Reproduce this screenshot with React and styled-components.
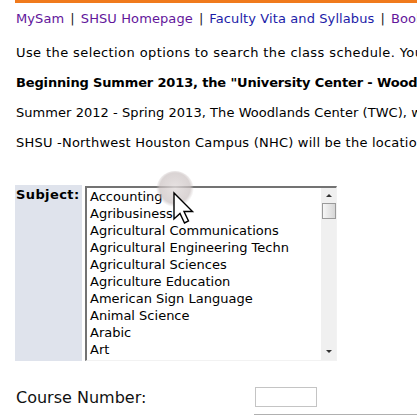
import styled, { createGlobalStyle } from 'styled-components';

const GlobalStyle = createGlobalStyle`
  html, body {
    margin: 0;
    padding: 0;
    background: #fff;
    overflow: hidden;
  }
  body {
    font-family: "DejaVu Sans", Verdana, sans-serif;
    color: #000;
  }
`;

const Page = styled.div`
  position: relative;
  width: 417px;
  height: 417px;
  overflow: hidden;
  padding-left: 15px;
  box-sizing: border-box;
`;

const OrangeBar = styled.div`
  height: 3px;
  background: #f07a1c;
  margin-right: -20px;
`;

const NavLine = styled.div`
  margin-top: 8px;
  padding-left: 1px;
  font-size: 13px;
  line-height: 15px;
  letter-spacing: 0.1px;
  white-space: nowrap;
  color: #333;
`;

const NavLink = styled.a`
  color: ${p => (p.$visited ? '#62169b' : '#1c1ca8')};
  text-decoration: none;
`;

const Sep = styled.span`
  margin: 0 6px;
  color: #222;
`;

const Para = styled.p`
  margin: ${p => p.$top || 15}px 0 0 1px;
  font-size: 13px;
  line-height: 15px;
  letter-spacing: ${p => p.$spacing || 0}px;
  white-space: nowrap;
  font-weight: ${p => (p.$bold ? 'bold' : 'normal')};
`;

const FormRow = styled.div`
  display: flex;
  align-items: stretch;
  margin-top: 35px;
  gap: 3px;
`;

const LabelCell = styled.div`
  width: 67px;
  background: #dfe3ec;
  font-weight: bold;
  font-size: 13px;
  letter-spacing: 0.4px;
  padding: 2px 0 0 1px;
  box-sizing: border-box;
`;

const ListBox = styled.div`
  display: flex;
  width: 252px;
  height: 175px;
  border-top: 2px solid #737373;
  border-left: 2px solid #737373;
  border-right: 1px solid #f2f2f2;
  border-bottom: 1px solid #f2f2f2;
  box-sizing: border-box;
  margin-top: 1px;
`;

const Options = styled.ul`
  flex: 1;
  list-style: none;
  margin: 0;
  padding: 0 0 0 3px;
  font-size: 13px;
  line-height: 17px;
  white-space: nowrap;
  overflow: hidden;
`;

const Scrollbar = styled.div`
  width: 15px;
  background: #f0f0f0;
  display: flex;
  flex-direction: column;
  align-items: center;
  padding-top: 6px;
`;

const Arrow = styled.div`
  width: 0;
  height: 0;
  border-left: 3px solid transparent;
  border-right: 3px solid transparent;
  ${p =>
    p.$down
      ? 'border-top: 3px solid #333; margin-top: auto; margin-bottom: 7px;'
      : 'border-bottom: 3px solid #333;'}
`;

const Thumb = styled.div`
  width: 14px;
  height: 16px;
  margin-top: 6px;
  border: 1px solid #9a9a9a;
  box-sizing: border-box;
  background: linear-gradient(to right, #f6f6f6, #d6d6d6);
`;

const CourseRow = styled.div`
  display: flex;
  align-items: center;
  margin-top: 26px;
`;

const CourseLabel = styled.div`
  width: 239px;
  padding-left: 1px;
  font-size: 16px;
  color: #111;
`;

const TextInput = styled.div`
  width: 62px;
  height: 20px;
  border: 1px solid #c4c4c4;
  box-sizing: border-box;
`;

const BottomLine = styled.div`
  margin: 7px -20px 0 239px;
  height: 1px;
  background: #b0b0b0;
`;

const Cursor = styled.svg`
  position: absolute;
  left: 150px;
  top: 168px;
  pointer-events: none;
`;

const subjects = [
  'Accounting',
  'Agribusiness',
  'Agricultural Communications',
  'Agricultural Engineering Techn',
  'Agricultural Sciences',
  'Agriculture Education',
  'American Sign Language',
  'Animal Science',
  'Arabic',
  'Art',
];

export default function App() {
  return (
    <Page>
      <GlobalStyle />
      <OrangeBar />
      <NavLine>
        <NavLink $visited href="#">MySam</NavLink>
        <Sep>|</Sep>
        <NavLink $visited href="#">SHSU Homepage</NavLink>
        <Sep>|</Sep>
        <NavLink href="#">Faculty Vita and Syllabus</NavLink>
        <Sep>|</Sep>
        <NavLink $visited href="#">Bookstore</NavLink>
      </NavLine>
      <Para $top={19} $spacing={0.4}>Use the selection options to search the class schedule. You can</Para>
      <Para $bold $spacing={-0.15}>Beginning Summer 2013, the "University Center - Woodlands"</Para>
      <Para $spacing={0.05}>Summer 2012 - Spring 2013, The Woodlands Center (TWC), will be</Para>
      <Para $spacing={0.22}>SHSU -Northwest Houston Campus (NHC) will be the location for</Para>
      <FormRow>
        <LabelCell>Subject:</LabelCell>
        <ListBox>
          <Options>
            {subjects.map(s => (
              <li key={s}>{s}</li>
            ))}
          </Options>
          <Scrollbar>
            <Arrow />
            <Thumb />
            <Arrow $down />
          </Scrollbar>
        </ListBox>
      </FormRow>
      <CourseRow>
        <CourseLabel>Course Number:</CourseLabel>
        <TextInput />
      </CourseRow>
      <BottomLine />
      <Cursor width="50" height="62" viewBox="0 0 50 62">
        <defs>
          <radialGradient id="halo" cx="0.5" cy="0.45" r="0.5">
            <stop offset="0" stopColor="#e2dcdc" stopOpacity="0.8" />
            <stop offset="0.8" stopColor="#cac1c1" stopOpacity="0.7" />
            <stop offset="1" stopColor="#cac1c1" stopOpacity="0" />
          </radialGradient>
        </defs>
        <circle cx="25" cy="22" r="19" fill="url(#halo)" />
        <path
          d="M24 25 L24 51 L30 45.5 L34.5 55 L38.5 53 L34 43.5 L42.5 43.5 Z"
          fill="#fff"
          stroke="#000"
          strokeWidth="1.4"
          strokeLinejoin="miter"
        />
      </Cursor>
    </Page>
  );
}
